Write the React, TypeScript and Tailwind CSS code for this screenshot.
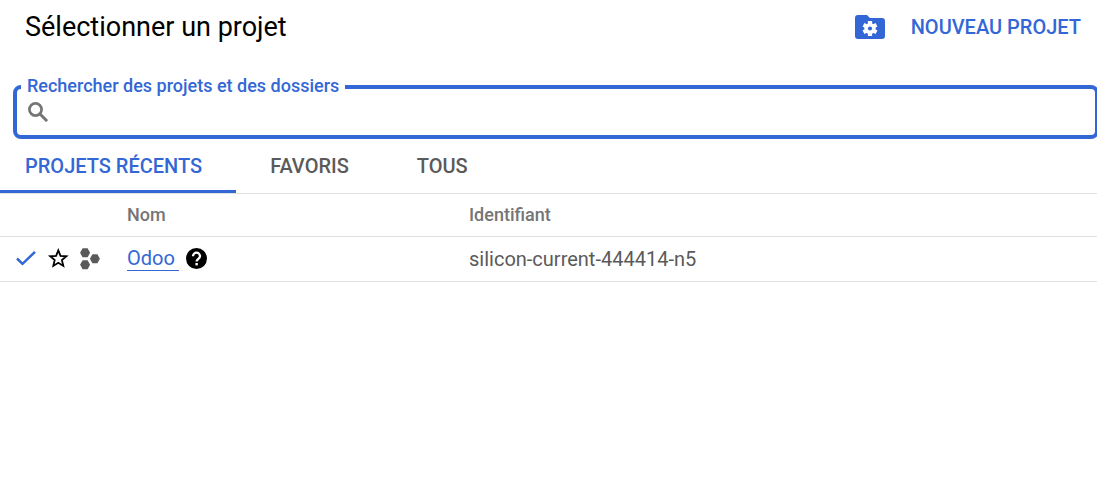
import React, { useState } from 'react';

interface Project {
  name: string;
  id: string;
}

const projects: Project[] = [{ name: 'Odoo', id: 'silicon-current-444414-n5' }];

const tabs = ['PROJETS RÉCENTS', 'FAVORIS', 'TOUS'];

const FolderSettingsIcon: React.FC = () => (
  <svg viewBox="0 0 30 24" className="w-[30px] h-6" aria-hidden="true">
    <path
      d="M3 0h9l3 3h12a3 3 0 0 1 3 3v15a3 3 0 0 1-3 3H3a3 3 0 0 1-3-3V3a3 3 0 0 1 3-3z"
      fill="currentColor"
    />
    <g fill="#fff" transform="translate(15 13.5)">
      <circle r="5.6" />
      <rect x="-2.1" y="-7.5" width="4.2" height="15" rx="0.5" />
      <rect x="-2.1" y="-7.5" width="4.2" height="15" rx="0.5" transform="rotate(60)" />
      <rect x="-2.1" y="-7.5" width="4.2" height="15" rx="0.5" transform="rotate(120)" />
    </g>
    <circle cx="15" cy="13.5" r="2.1" fill="currentColor" />
  </svg>
);

const SearchIcon: React.FC = () => (
  <svg viewBox="0 0 20 20" className="size-5 text-[#757575]" aria-hidden="true">
    <g fill="none" stroke="currentColor">
      <circle cx="7.5" cy="7.5" r="6.1" strokeWidth="2.7" />
      <path d="M11.8 11.8l7.3 7.3" strokeWidth="3" />
    </g>
  </svg>
);

const CheckIcon: React.FC = () => (
  <svg viewBox="0 0 20 16" className="w-5 h-4" aria-hidden="true">
    <path d="M1 7.5l5.5 5.3L19 0.9" fill="none" stroke="currentColor" strokeWidth="2.5" />
  </svg>
);

const StarIcon: React.FC = () => (
  <svg viewBox="0 0 22 22" className="size-[22px]" aria-hidden="true">
    <path
      d="M11.3 2.4L13.5 7.9 19.4 8.3 14.9 12.1 16.3 17.9 11.3 14.8 6.3 17.9 7.7 12.1 3.2 8.3 9.1 7.9z"
      fill="none"
      stroke="currentColor"
      strokeWidth="1.8"
    />
  </svg>
);

const ProjectIcon: React.FC = () => (
  <svg viewBox="0 0 20 22" className="w-5 h-[22px]" fill="currentColor" aria-hidden="true">
    <path d="M2.6 0.3h5l2.5 4.5-2.5 4.5h-5L0.1 4.8z" />
    <path d="M2.6 12.3h5l2.5 4.5-2.5 4.5h-5l-2.5-4.5z" />
    <path d="M12.4 6.3h5l2.5 4.5-2.5 4.5h-5l-2.5-4.5z" />
  </svg>
);

const HelpIcon: React.FC = () => (
  <svg viewBox="0 0 21 21" className="size-[21px] text-black" aria-hidden="true">
    <circle cx="10.5" cy="10.5" r="10.5" fill="currentColor" />
    <path
      d="M7 8.2a3.5 3.5 0 1 1 7 0c0 2.4-3.4 2.8-3.4 5.3"
      fill="none"
      stroke="#fff"
      strokeWidth="2.3"
    />
    <rect x="9.4" y="15" width="2.4" height="2.4" fill="#fff" />
  </svg>
);

const App: React.FC = () => {
  const [activeTab, setActiveTab] = useState(tabs[0]);
  const [query, setQuery] = useState('');

  return (
    <main className="min-h-screen overflow-hidden bg-white text-black font-['Roboto',sans-serif]">
      <header className="flex items-center justify-between pt-[7px] pl-[25px] pr-4">
        <h1 className="text-[27px] leading-10">Sélectionner un projet</h1>
        <div className="flex items-center gap-[26px] text-[#3367d6]">
          <button type="button" aria-label="Gérer les ressources">
            <FolderSettingsIcon />
          </button>
          <button type="button" className="text-xl leading-10 font-medium">
            NOUVEAU PROJET
          </button>
        </div>
      </header>

      <fieldset className="mt-[27px] ml-[13px] -mr-0.5 pl-2 pb-[11px] border-4 border-[#3367d6] rounded-lg">
        <legend className="-ml-1 px-1.5 pb-0.5 text-lg leading-6 font-medium text-[#3367d6]">
          <label htmlFor="search">Rechercher des projets et des dossiers</label>
        </legend>
        <div className="flex items-center h-6 pl-[3px]">
          <SearchIcon />
          <input
            id="search"
            type="text"
            value={query}
            onChange={(e) => setQuery(e.target.value)}
            className="flex-1 h-6 ml-2 text-xl outline-none"
          />
        </div>
      </fieldset>

      <div role="tablist" className="flex -ml-[9px] border-b border-[#e0e0e0]">
        {tabs.map((tab) => (
          <button
            key={tab}
            type="button"
            role="tab"
            aria-selected={tab === activeTab}
            onClick={() => setActiveTab(tab)}
            className={`h-[54px] pt-[3px] px-[34px] border-b-[3px] text-xl font-medium ${
              tab === activeTab
                ? 'border-[#3367d6] text-[#3367d6]'
                : 'border-transparent text-[#5a5a5a]'
            }`}
          >
            {tab}
          </button>
        ))}
      </div>

      <table className="w-full table-fixed text-left">
        <thead>
          <tr className="h-[42px] border-b border-[#e0e0e0] text-lg text-[#757575]">
            <td className="w-[127px]" />
            <th className="w-[342px] font-medium">Nom</th>
            <th className="font-medium">Identifiant</th>
          </tr>
        </thead>
        <tbody>
          {projects.map((project) => (
            <tr key={project.id} className="h-[45px] border-b border-[#e0e0e0] text-xl text-[#5a5a5a]">
              <td>
                <div className="flex items-center gap-[11px] pl-4">
                  <span className="text-[#3367d6]">
                    <CheckIcon />
                  </span>
                  <button type="button" aria-label="Ajouter aux favoris" className="text-black">
                    <StarIcon />
                  </button>
                  <ProjectIcon />
                </div>
              </td>
              <td>
                <div className="flex items-center gap-[7px]">
                  <a href="#odoo" className="pr-1 border-b border-[#3367d6] leading-6 text-[#3367d6]">
                    {project.name}
                  </a>
                  <HelpIcon />
                </div>
              </td>
              <td>{project.id}</td>
            </tr>
          ))}
        </tbody>
      </table>
    </main>
  );
};

export default App;
